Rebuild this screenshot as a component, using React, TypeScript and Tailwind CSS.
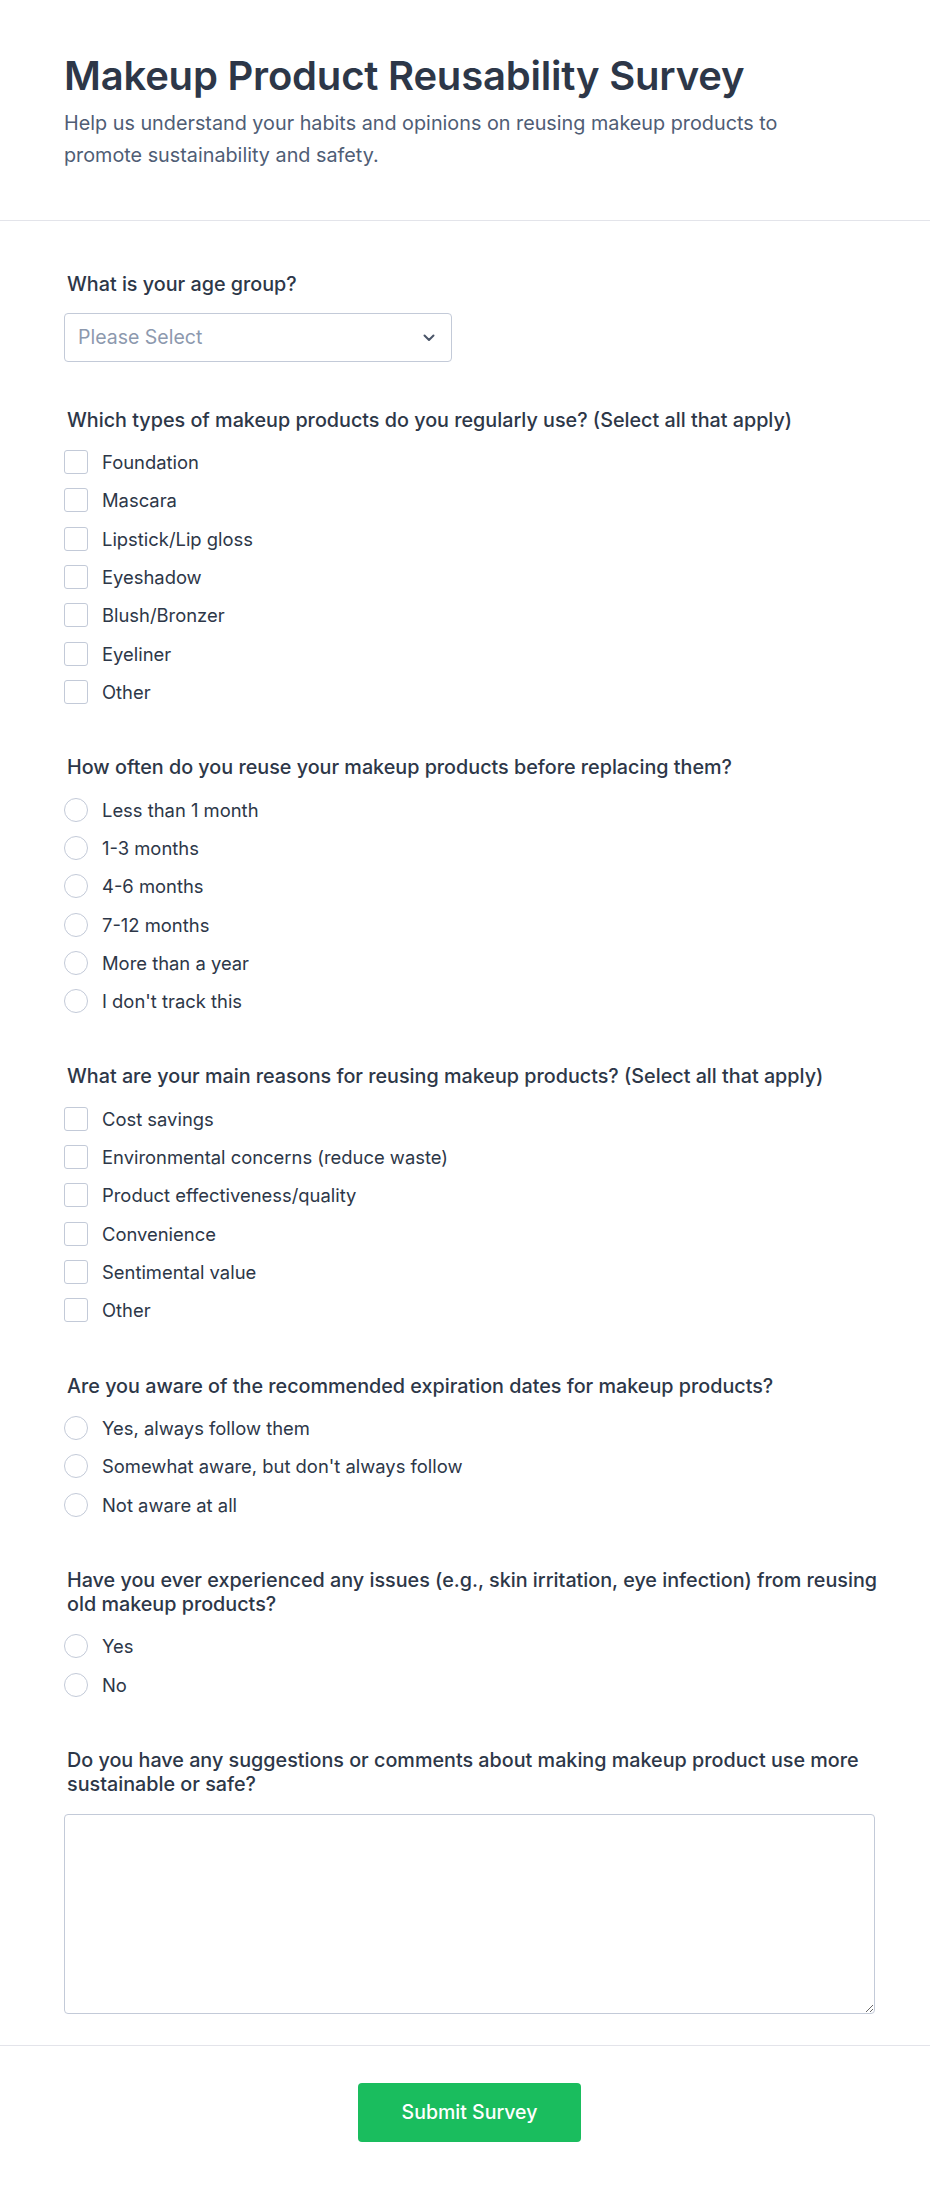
import React from "react";

type Q =
  | { kind: "select"; label: string }
  | { kind: "check" | "radio"; label: string; options: string[] }
  | { kind: "text"; label: string };

const questions: Q[] = [
  { kind: "select", label: "What is your age group?" },
  {
    kind: "check",
    label: "Which types of makeup products do you regularly use? (Select all that apply)",
    options: ["Foundation", "Mascara", "Lipstick/Lip gloss", "Eyeshadow", "Blush/Bronzer", "Eyeliner", "Other"],
  },
  {
    kind: "radio",
    label: "How often do you reuse your makeup products before replacing them?",
    options: ["Less than 1 month", "1-3 months", "4-6 months", "7-12 months", "More than a year", "I don't track this"],
  },
  {
    kind: "check",
    label: "What are your main reasons for reusing makeup products? (Select all that apply)",
    options: [
      "Cost savings",
      "Environmental concerns (reduce waste)",
      "Product effectiveness/quality",
      "Convenience",
      "Sentimental value",
      "Other",
    ],
  },
  {
    kind: "radio",
    label: "Are you aware of the recommended expiration dates for makeup products?",
    options: ["Yes, always follow them", "Somewhat aware, but don't always follow", "Not aware at all"],
  },
  {
    kind: "radio",
    label: "Have you ever experienced any issues (e.g., skin irritation, eye infection) from reusing old makeup products?",
    options: ["Yes", "No"],
  },
  {
    kind: "text",
    label: "Do you have any suggestions or comments about making makeup product use more sustainable or safe?",
  },
];

function Label({ children }: { children: React.ReactNode }) {
  return (
    <div className="-mr-[8px] pl-[3px] text-[19.75px] leading-[24px] font-medium text-[#2d3748]">{children}</div>
  );
}

function Option({ kind, text }: { kind: "check" | "radio"; text: string }) {
  return (
    <label className="flex h-[38.33px] items-center gap-[14px]">
      <span
        className={
          kind === "check"
            ? "block h-6 w-6 shrink-0 rounded-[3px] border border-[#c3cad8] bg-white"
            : "block h-6 w-6 shrink-0 rounded-full border border-[#c3cad8] bg-white"
        }
      />
      <span className="text-[18.4px] leading-[24px] text-[#2d3748]">{text}</span>
    </label>
  );
}

export default function App() {
  return (
    <div className="min-h-[2193px] w-full bg-white font-['Inter',sans-serif]">
      <header className="border-b border-[#e3e4ea] pb-[49px] pl-16 pr-[55px] pt-[52px]">
        <h1 className="text-[40px] font-semibold leading-[48px] tracking-[-0.2px] text-[#2d3748]">
          Makeup Product Reusability Survey
        </h1>
        <p className="mt-[7px] max-w-3xl text-[19.8px] leading-[32px] text-[#4f5d75]">
          Help us understand your habits and opinions on reusing makeup products to promote sustainability and safety.
        </p>
      </header>

      <form className="pb-[31px] pl-16 pr-[55px] pt-[51px]">
        {questions.map((q, i) => {
          if (q.kind === "select") {
            return (
              <div key={i} className="mb-[45.5px]">
                <Label>{q.label}</Label>
                <div className="mt-[17px] flex h-[49px] w-[388px] items-center justify-between rounded-[4px] border border-[#c3cad8] bg-white pl-[13px] pr-[16px]">
                  <span className="text-[19.5px] text-[#8d99ae]">Please Select</span>
                  <svg width="12" height="8" viewBox="0 0 12 8" fill="none">
                    <path d="M1.5 1.5L6 6L10.5 1.5" stroke="#4a5568" strokeWidth="2" strokeLinecap="round" strokeLinejoin="round" />
                  </svg>
                </div>
              </div>
            );
          }
          if (q.kind === "text") {
            return (
              <div key={i}>
                <Label>{q.label}</Label>
                <textarea className="mt-[18px] block h-[200px] w-full rounded-[4px] border border-[#c3cad8] bg-white" />
              </div>
            );
          }
          return (
            <div key={i} className="mb-[44px]">
              <Label>{q.label}</Label>
              <div className="mt-[11.3px] flex flex-col">
                {q.options.map((o) => (
                  <Option key={o} kind={q.kind} text={o} />
                ))}
              </div>
            </div>
          );
        })}
      </form>

      <footer className="flex justify-center border-t border-[#e3e4ea] pb-[50px] pl-16 pr-[55px] pt-[37px]">
        <button
          type="button"
          className="h-[59px] w-[223px] rounded-[4px] bg-[#1abd5e] text-[19.5px] font-medium text-white"
        >
          Submit Survey
        </button>
      </footer>
    </div>
  );
}
